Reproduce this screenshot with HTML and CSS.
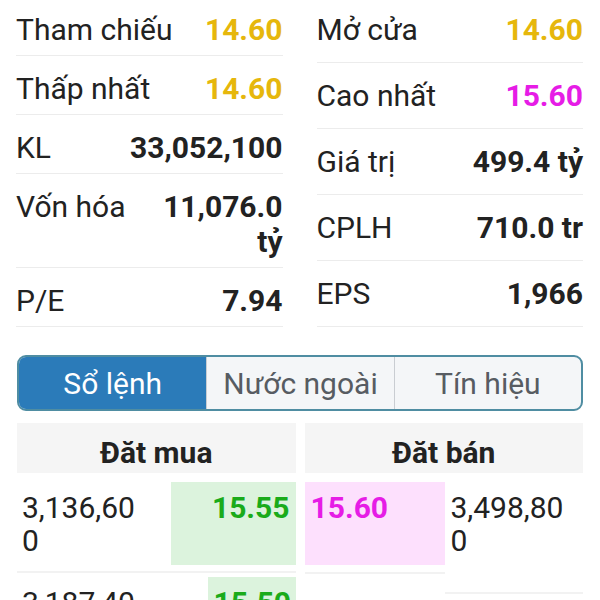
FILE: index.html
```html
<!DOCTYPE html>
<html lang="vi">
<head>
    <meta charset="UTF-8">
    <meta name="viewport" content="width=device-width, initial-scale=1">
    <title>Chi tiết mã</title>
    <link rel="stylesheet" href="styles.css">
</head>
<body>
<div class="page">
    <div class="stats">
        <div class="col col-left">
            <div class="stat"><span class="label">Tham chiếu</span><span class="value ref">14.60</span></div>
            <div class="stat"><span class="label">Thấp nhất</span><span class="value ref">14.60</span></div>
            <div class="stat"><span class="label">KL</span><span class="value">33,052,100</span></div>
            <div class="stat"><span class="label">Vốn hóa</span><span class="value narrow">11,076.0 tỷ</span></div>
            <div class="stat"><span class="label">P/E</span><span class="value">7.94</span></div>
        </div>
        <div class="col col-right">
            <div class="stat"><span class="label">Mở cửa</span><span class="value ref">14.60</span></div>
            <div class="stat"><span class="label">Cao nhất</span><span class="value ceil">15.60</span></div>
            <div class="stat"><span class="label">Giá trị</span><span class="value">499.4 tỷ</span></div>
            <div class="stat"><span class="label">CPLH</span><span class="value">710.0 tr</span></div>
            <div class="stat"><span class="label">EPS</span><span class="value">1,966</span></div>
        </div>
    </div>

    <div class="tabs">
        <div class="tab active">Sổ lệnh</div>
        <div class="tab">Nước ngoài</div>
        <div class="tab">Tín hiệu</div>
    </div>

    <div class="book">
        <div class="side buy">
            <div class="side-head">Đăt mua</div>
            <div class="order">
                <div class="vol">3,136,600</div>
                <div class="price" style="width: 125px">15.55</div>
            </div>
            <div class="order">
                <div class="vol">3,187,400</div>
                <div class="price" style="width: 88px">15.50</div>
            </div>
        </div>
        <div class="side sell">
            <div class="side-head">Đăt bán</div>
            <div class="order">
                <div class="price-col">
                    <div class="price">15.60</div>
                </div>
                <div class="vol">3,498,800</div>
            </div>
        </div>
    </div>
</div>
</body>
</html>
```

FILE: styles.css
```css
body {
    margin: 0;
    background: #fff;
    color: #222;
    font-family: Roboto, "Noto Sans", sans-serif;
    overflow: hidden;
}

.page {
    padding: 0 17px 0 16px;
}

/* thong tin gia */
.stats {
    display: grid;
    grid-template-columns: 1fr 1fr;
    column-gap: 34px;
    margin-top: -3px;
}

.col {
    display: flex;
    flex-direction: column;
}

.stat {
    display: flex;
    justify-content: space-between;
    align-items: flex-start;
    padding: 15px 0 8px;
    border-bottom: 1px solid #ececec;
    font-size: 30px;
    line-height: 35px;
}

.col-right .stat {
    flex: 1;
    align-items: center;
    padding: 0;
}

.label {
    white-space: nowrap;
}

.value {
    font-weight: bold;
    text-align: right;
}

.value.narrow {
    max-width: 125px;
}

.ref {
    color: #e6b70c;
}

.ceil {
    color: #e61ce6;
}

/* tabs */
.tabs {
    display: grid;
    grid-template-columns: repeat(3, 1fr);
    margin: 28px 0 0 1px;
    height: 52px;
    border: 2px solid #4f8da2;
    border-radius: 9px;
    overflow: hidden;
    background: #f4f6f8;
}

.tab {
    display: flex;
    align-items: center;
    justify-content: center;
    font-size: 30px;
    color: #575c62;
    border-left: 1px solid #c9cdd2;
}

.tab:first-child {
    border-left: none;
}

.tab.active {
    background: #2b7bb9;
    color: #fff;
}

/* so lenh */
.book {
    display: grid;
    grid-template-columns: 1fr 1fr;
    column-gap: 9px;
    margin: 12px 0 0 1px;
}

.side-head {
    height: 50px;
    background: #f5f5f5;
    font-size: 30px;
    font-weight: bold;
    text-align: center;
    line-height: 60px;
    margin-bottom: 9px;
}

.order {
    display: flex;
    align-items: flex-start;
    font-size: 30px;
    line-height: 33px;
}

.buy .order {
    padding-bottom: 6px;
    border-bottom: 2px solid #f2f2f2;
}

.buy .order + .order {
    margin-top: 4px;
}

.vol {
    flex: 1;
    box-sizing: border-box;
    padding: 9px 0 0 5px;
    word-break: break-all;
}

.buy .vol {
    max-width: 154px;
    padding-right: 32px;
}

.price {
    height: 83px;
    box-sizing: border-box;
    padding: 9px 6px 0;
    font-weight: bold;
}

.buy .price {
    margin-left: auto;
    background: #dcf3dd;
    color: #1aab1a;
    text-align: right;
}

.price-col {
    width: 140px;
    padding-bottom: 7px;
    border-bottom: 2px solid #f2f2f2;
}

.sell .price {
    background: #fde0fd;
    color: #e61ce6;
}

.sell .vol {
    height: 112px;
    padding: 9px 12px 0 6px;
    border-bottom: 2px solid #f2f2f2;
}
```
